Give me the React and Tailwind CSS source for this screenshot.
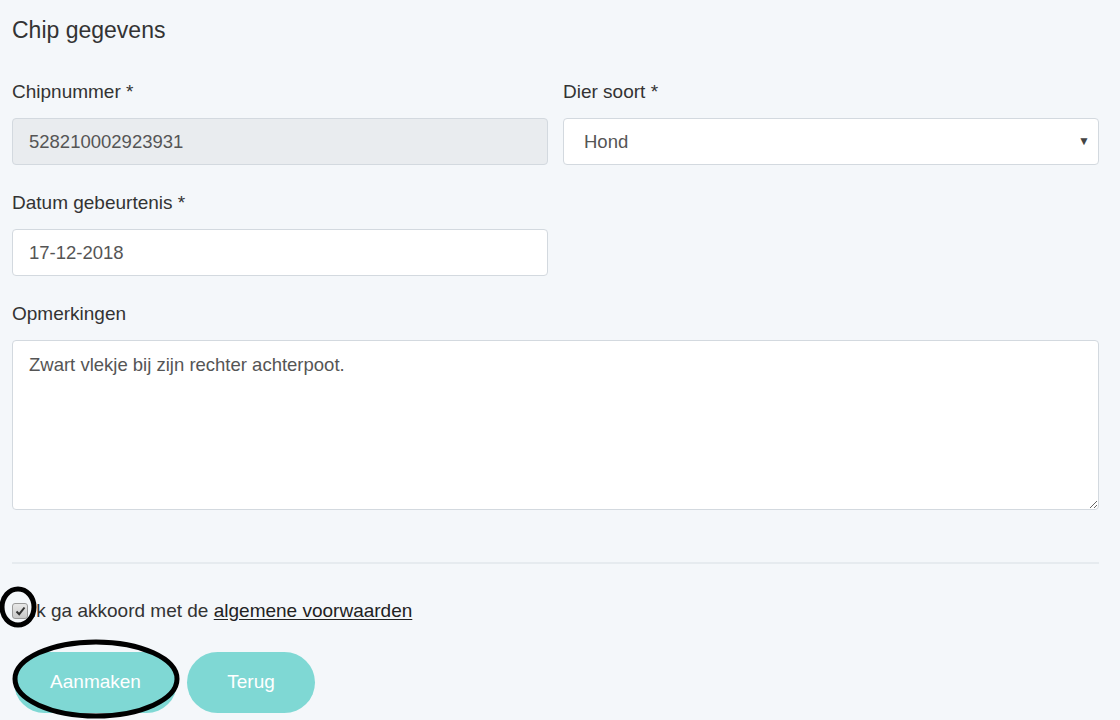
import React from 'react';

const font = { fontFamily: '"Liberation Sans", Arial, sans-serif' };

function Field({ label, children, className = '' }) {
  return (
    <div className={`flex flex-col ${className}`}>
      <label className="text-[19px] leading-[27px] text-[#333]">{label}</label>
      <div className="mt-[13px]">{children}</div>
    </div>
  );
}

const inputCls =
  'block w-full h-[47px] rounded-[4px] border border-[#d3d9df] px-[16px] text-[18.5px] text-[#555] outline-none';

export default function App() {
  return (
    <div className="min-h-[720px] w-full bg-[#f4f7fa] pl-[12px] pr-[21px] pt-[15px]" style={font}>
      <h2 className="text-[23px] leading-[30px] text-[#333]">Chip gegevens</h2>

      <div className="mt-[33px] grid grid-cols-2 gap-x-[15px]">
        <Field label="Chipnummer *">
          <input readOnly value="528210002923931" className={`${inputCls} bg-[#e9ecef]`} />
        </Field>
        <Field label="Dier soort *">
          <div className="relative">
            <select
              className={`${inputCls} appearance-none bg-white pl-[20px]`}
              defaultValue="Hond"
            >
              <option>Hond</option>
              <option>Kat</option>
            </select>
            <span className="pointer-events-none absolute right-[9px] top-[14px] text-[12px] text-[#444]">▼</span>
          </div>
        </Field>
      </div>

      <div className="mt-[24px] grid grid-cols-2 gap-x-[15px]">
        <Field label="Datum gebeurtenis *">
          <input readOnly value="17-12-2018" className={`${inputCls} bg-white`} />
        </Field>
      </div>

      <Field label="Opmerkingen" className="mt-[24px]">
        <textarea
          readOnly
          value="Zwart vlekje bij zijn rechter achterpoot."
          className="block h-[170px] w-full rounded-[4px] border border-[#d3d9df] bg-white px-[16px] py-[11px] text-[18.5px] leading-[26px] text-[#555] outline-none"
        />
      </Field>

      <div className="mt-[52px] h-[2px] w-full bg-[#e6ebef]" />

      <div className="relative mt-[36px] flex items-center h-[22px]">
        <span className="mr-[3px] flex h-[16px] w-[16px] items-center justify-center rounded-[3px] border border-[#9a9a9a] bg-gradient-to-b from-[#e8e8e8] to-[#c9c9c9]">
          <svg width="11" height="10" viewBox="0 0 11 10">
            <path d="M1.5 5.5 L4.2 8.2 L9.5 1.5" fill="none" stroke="#333" strokeWidth="2" />
          </svg>
        </span>
        <span className="text-[19px] text-[#333]">
          Ik ga akkoord met de <span className="underline underline-offset-2 text-[#222]">algemene voorwaarden</span>
        </span>
        <svg className="pointer-events-none absolute left-[-15px] top-[-15px]" width="42" height="44" viewBox="0 0 42 44">
          <ellipse cx="21" cy="22" rx="16" ry="18" fill="none" stroke="#000" strokeWidth="5" />
        </svg>
      </div>

      <div className="relative mt-[30px] flex gap-[10px] pl-[2px]">
        <button className="h-[61px] w-[163px] rounded-full bg-[#7fd8d4] text-[19px] text-white">Aanmaken</button>
        <button className="h-[61px] w-[128px] rounded-full bg-[#7fd8d4] text-[19px] text-white">Terug</button>
        <svg className="pointer-events-none absolute left-[0px] top-[-14px]" width="172" height="84" viewBox="0 0 172 84">
          <ellipse cx="84" cy="41" rx="81" ry="37" fill="none" stroke="#000" strokeWidth="5" />
        </svg>
      </div>
    </div>
  );
}
